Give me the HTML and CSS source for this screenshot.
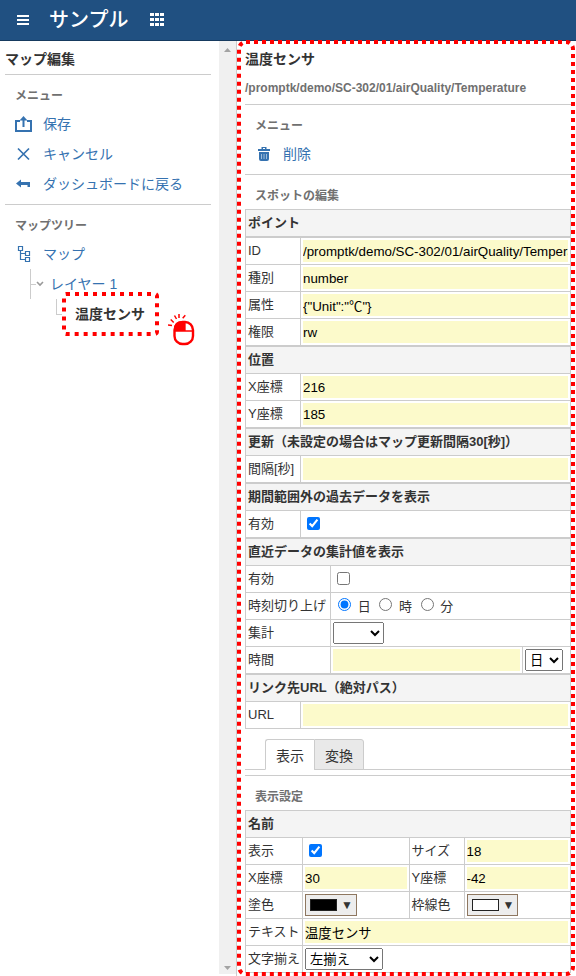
FILE: index.html
```html
<!DOCTYPE html>
<html lang="ja">
<head>
    <meta charset="UTF-8">
    <meta name="viewport" content="width=device-width, initial-scale=1.0">
    <title>マップ編集 - サンプル</title>
    <link rel="stylesheet" href="styles.css">
</head>
<body>

    <!-- Header -->
    <header class="header">
        <button class="header-btn" type="button" aria-label="Menu">
            <svg width="16" height="16" viewBox="0 0 16 16"><path d="M2 4h12M2 8h12M2 12h12" stroke="#fff" stroke-width="2"/></svg>
        </button>
        <a class="brand" href="#">サンプル</a>
        <button class="header-btn" type="button" aria-label="Apps">
            <svg width="16" height="16" viewBox="0 0 16 16" fill="#fff"><path d="M1 1h4v3H1zM6 1h4v3H6zM11 1h4v3h-4zM1 6h4v3H1zM6 6h4v3H6zM11 6h4v3h-4zM1 11h4v3H1zM6 11h4v3H6zM11 11h4v3h-4z"/></svg>
        </button>
    </header>

    <div class="layout">

        <!-- Sidebar -->
        <nav class="sidebar">
            <h1 class="pane-title">マップ編集</h1>
            <section class="section">
                <h2 class="section-title">メニュー</h2>
                <ul class="menu">
                    <li><a href="#">
                        <svg width="18" height="16" viewBox="0 0 18 16" fill="none" stroke="#3572b0" stroke-width="2"><path d="M5 5H1v10h15V5h-4M8.500 11V3"/><path d="M4.500 4.500L8.500 0l4 4.500z" fill="#3572b0" stroke="none"/></svg>
                        保存</a></li>
                    <li><a href="#">
                        <svg width="18" height="16" viewBox="0 0 18 16" fill="none" stroke="#3572b0" stroke-width="1.7"><path d="M3 2.500l11 11M14 2.500l-11 11"/></svg>
                        キャンセル</a></li>
                    <li><a href="#">
                        <svg width="18" height="16" viewBox="0 0 18 16" fill="#3572b0"><path d="M1 7.500l5-4V6h9v5h-2.500V9H6v2.500z"/></svg>
                        ダッシュボードに戻る</a></li>
                </ul>
            </section>
            <section class="section">
                <h2 class="section-title">マップツリー</h2>
                <ul class="menu">
                    <li><a href="#">
                        <svg width="18" height="18" viewBox="0 0 18 18" fill="none" stroke="#3572b0" stroke-width="1.2"><path d="M3.500 1.500h4v4h-4zM10.500 6.500h4v4h-4zM10.500 12.500h4v4h-4zM5.500 5.500v9h5M5.500 8.500h5"/></svg>
                        マップ</a>
                        <ul class="tree">
                            <li class="tree-layer">
                                <a href="#">
                                    <svg width="8" height="8" viewBox="0 0 8 8" fill="none" stroke="#999" stroke-width="1.6"><path d="M1 2l3 3 3-3"/></svg>
                                    レイヤー 1</a>
                                <ul class="tree">
                                    <li class="tree-spot">
                                        <a href="#">温度センサ</a>
                                        <svg class="frame spot-frame" aria-hidden="true"><rect class="frame-line" x="2" y="2" rx="2"/></svg>
                                        <svg class="click-mark" width="28" height="34" viewBox="0 0 28 34" fill="none" stroke="#ff0000" aria-hidden="true">
                                            <path d="M6 18v-2q0-8 8-8h3v10z" fill="#ff0000" stroke="none"/>
                                            <rect x="6.500" y="9" width="18.500" height="22" rx="8" stroke-width="2.4"/>
                                            <path d="M17 9v9M6 18h19" stroke-width="1.3"/>
                                            <path d="M0 12l4 .6M2.700 6.500l3 3M6.500 2.500l2 3.500M11 1v4M17.300 2.300l-2.600 3" stroke-width="1.5"/>
                                        </svg>
                                    </li>
                                </ul>
                            </li>
                        </ul>
                    </li>
                </ul>
            </section>
        </nav>
        <div class="scrollbar">
            <svg width="17" height="17" viewBox="0 0 17 17"><path d="M5 11l3.500-4L12 11z" fill="#a3a3a3"/></svg>
            <svg width="17" height="17" viewBox="0 0 17 17"><path d="M5 9l3.500 4L12 9z" fill="#a3a3a3"/></svg>
        </div>

        <!-- Spot editor -->
        <main class="editor">
            <h1 class="pane-title">温度センサ</h1>
            <p class="path">/promptk/demo/SC-302/01/airQuality/Temperature</p>
            <section class="section">
                <h2 class="section-title">メニュー</h2>
                <ul class="menu">
                    <li><a href="#">
                        <svg width="18" height="16" viewBox="0 0 18 16" fill="#3572b0"><path d="M3 3h3.500V1h5v2H15v2H3zM8 2v1h2V2zM4 6h10v7q0 2-2 2H6q-2 0-2-2z" fill-rule="evenodd"/><path d="M6.500 8v5M9 8v5M11.500 8v5" stroke="#9dbbd9"/></svg>
                        削除</a></li>
                </ul>
            </section>

            <section class="section section-form">
                <h2 class="section-title">スポットの編集</h2>
                <table class="form">
                    <tr><th>ポイント</th></tr>
                </table>
                <table class="form">
                    <colgroup><col class="col-label"><col></colgroup>
                    <tr><td><label for="pointId">ID</label></td><td><input type="text" id="pointId" value="/promptk/demo/SC-302/01/airQuality/Temperature"></td></tr>
                    <tr><td><label for="pointType">種別</label></td><td><input type="text" id="pointType" value="number"></td></tr>
                    <tr><td><label for="pointAttr">属性</label></td><td><input type="text" id="pointAttr" value="{&quot;Unit&quot;:&quot;℃&quot;}"></td></tr>
                    <tr><td><label for="pointPerm">権限</label></td><td><input type="text" id="pointPerm" value="rw"></td></tr>
                </table>
                <table class="form">
                    <colgroup><col class="col-label"><col></colgroup>
                    <tr><th colspan="2">位置</th></tr>
                    <tr><td><label for="posX">X座標</label></td><td><input type="text" id="posX" value="216"></td></tr>
                    <tr><td><label for="posY">Y座標</label></td><td><input type="text" id="posY" value="185"></td></tr>
                </table>
                <table class="form">
                    <colgroup><col class="col-label"><col></colgroup>
                    <tr><th colspan="2">更新（未設定の場合はマップ更新間隔30[秒]）</th></tr>
                    <tr><td><label for="interval">間隔[秒]</label></td><td><input type="text" id="interval"></td></tr>
                </table>
                <table class="form">
                    <colgroup><col class="col-label"><col></colgroup>
                    <tr><th colspan="2">期間範囲外の過去データを表示</th></tr>
                    <tr><td><label for="pastData">有効</label></td><td><input type="checkbox" id="pastData" checked></td></tr>
                </table>
                <table class="form">
                    <colgroup><col class="col-label-wide"><col><col class="col-unit"></colgroup>
                    <tr><th colspan="3">直近データの集計値を表示</th></tr>
                    <tr><td><label for="aggEnabled">有効</label></td><td colspan="2"><input type="checkbox" id="aggEnabled"></td></tr>
                    <tr>
                        <td>時刻切り上げ</td>
                        <td colspan="2">
                            <input type="radio" name="roundUp" id="roundDay" checked> <label for="roundDay">日</label>
                            <input type="radio" name="roundUp" id="roundHour"> <label for="roundHour">時</label>
                            <input type="radio" name="roundUp" id="roundMin"> <label for="roundMin">分</label>
                        </td>
                    </tr>
                    <tr><td><label for="aggType">集計</label></td><td colspan="2"><select class="select-agg" id="aggType"><option></option></select></td></tr>
                    <tr>
                        <td><label for="aggTime">時間</label></td>
                        <td><input type="text" id="aggTime"></td>
                        <td><select class="select-unit" aria-label="時間の単位"><option>日</option></select></td>
                    </tr>
                </table>
                <table class="form">
                    <colgroup><col class="col-label"><col></colgroup>
                    <tr><th colspan="2">リンク先URL（絶対パス）</th></tr>
                    <tr><td><label for="linkUrl">URL</label></td><td><input type="text" id="linkUrl"></td></tr>
                </table>
            </section>

            <div class="tabs">
                <button class="tab active" type="button">表示</button>
                <button class="tab" type="button">変換</button>
            </div>

            <section class="section section-form">
                <h2 class="section-title">表示設定</h2>
                <table class="form">
                    <colgroup><col class="col-name"><col><col class="col-label"><col></colgroup>
                    <tr><th colspan="4">名前</th></tr>
                    <tr>
                        <td><label for="nameShow">表示</label></td>
                        <td><input type="checkbox" id="nameShow" checked></td>
                        <td><label for="nameSize">サイズ</label></td>
                        <td><input type="text" id="nameSize" value="18"></td>
                    </tr>
                    <tr>
                        <td><label for="nameX">X座標</label></td>
                        <td><input type="text" id="nameX" value="30"></td>
                        <td><label for="nameY">Y座標</label></td>
                        <td><input type="text" id="nameY" value="-42"></td>
                    </tr>
                    <tr>
                        <td><label for="fillColor">塗色</label></td>
                        <td><button class="color-btn" type="button" id="fillColor"><span class="swatch black"></span>▼</button></td>
                        <td><label for="lineColor">枠線色</label></td>
                        <td><button class="color-btn" type="button" id="lineColor"><span class="swatch"></span>▼</button></td>
                    </tr>
                    <tr><td><label for="nameText">テキスト</label></td><td colspan="3"><input type="text" id="nameText" value="温度センサ"></td></tr>
                    <tr><td><label for="nameAlign">文字揃え</label></td><td colspan="3"><select class="select-align" id="nameAlign"><option>左揃え</option></select></td></tr>
                </table>
            </section>
            <svg class="frame editor-frame" aria-hidden="true"><rect class="frame-line" x="2" y="2" rx="7"/></svg>
        </main>
    </div>

</body>
</html>
```

FILE: styles.css
```css
* {
    margin: 0;
    padding: 0;
    box-sizing: border-box;
}
body {
    background-color: #fff;
    color: #333;
    font-family: "Liberation Sans", Arial, "Noto Sans CJK JP", sans-serif;
    font-size: 14px;
    line-height: 20px;
}
ul {
    list-style: none;
}
a {
    color: #3572b0;
    text-decoration: none;
}

/* Header */
.header {
    display: flex;
    align-items: center;
    height: 41px;
    padding: 0 15px;
    background-color: #205081;
    border-bottom: 1px solid #163a5f;
}
.header-btn {
    width: 16px;
    height: 16px;
    border: none;
    background: none;
    cursor: pointer;
}
.header-btn svg {
    display: block;
}
.brand {
    margin: 0 21px 0 18px;
    color: #fff;
    font-size: 20px;
    font-weight: 500;
}

.layout {
    display: flex;
    min-height: calc(100vh - 41px);
}

/* Sidebar */
.sidebar {
    width: 219px;
    flex-shrink: 0;
    padding: 3px 8px 0 5px;
}
.scrollbar {
    display: flex;
    flex-direction: column;
    justify-content: space-between;
    width: 17px;
    flex-shrink: 0;
    margin-bottom: 2px;
    background-color: #f0f0f0;
}
.pane-title {
    height: 30px;
    font-size: 14px;
    font-weight: bold;
    line-height: 30px;
}
.section {
    padding: 5px 0;
    border-top: 1px solid #ccc;
}
.section-title {
    padding: 3px 0 0 10px;
    color: #707070;
    font-size: 12px;
    font-weight: bold;
    line-height: 26px;
}
.menu a {
    display: flex;
    align-items: center;
    gap: 10px;
    height: 30px;
    padding-left: 10px;
}

/* Map tree */
.tree li {
    position: relative;
}
.tree-layer {
    margin-left: 25px;
}
.menu .tree-layer > a {
    gap: 6px;
    padding-left: 6px;
}
.tree-spot {
    margin-left: 26px;
}
.menu .tree-spot a {
    padding-left: 19px;
    color: #333;
    font-weight: bold;
}
.tree li::before {
    content: "";
    position: absolute;
    top: 0;
    left: 0;
    width: 5px;
    height: 15px;
    border-left: 1px solid #ccc;
    border-bottom: 1px solid #ccc;
}
.tree-layer::after {
    content: "";
    position: absolute;
    top: 0;
    left: 0;
    height: 30px;
    border-left: 1px solid #ccc;
}

/* Red dotted frames */
.frame {
    position: absolute;
    pointer-events: none;
}
.frame-line {
    width: calc(100% - 4px);
    height: calc(100% - 4px);
    fill: none;
    stroke: #ff0000;
    stroke-width: 4px;
    stroke-dasharray: 4 4;
}
.spot-frame {
    top: -7px;
    left: 6px;
    width: 97px;
    height: 44px;
}
.spot-frame .frame-line {
    stroke-dasharray: 4 5;
}
.editor-frame {
    top: -1px;
    left: 0;
    width: calc(100% - 1px);
    height: calc(100% + 1px);
}
.click-mark {
    position: absolute;
    top: 14px;
    left: 112px;
}

/* Editor */
.editor {
    position: relative;
    flex: 1;
    min-width: 0;
    padding: 3px 5px 0 8px;
    border-left: 1px solid #ccc;
}
.path {
    padding-bottom: 1px;
    color: #707070;
    font-size: 12px;
    font-weight: bold;
    line-height: 29px;
}
.section-form {
    padding-bottom: 0;
}
.form {
    width: 100%;
    table-layout: fixed;
    border-collapse: collapse;
    font-size: 13px;
}
.form th,
.form td {
    height: 27px;
    padding: 0 2px;
    border: 1px solid #ccc;
    text-align: left;
    vertical-align: middle;
    white-space: nowrap;
}
.form th {
    background-color: #f4f4f4;
    font-weight: bold;
}
.col-label {
    width: 55px;
}
.col-name {
    width: 57px;
}
.col-label-wide {
    width: 85px;
}
.col-unit {
    width: 48px;
}
.form input[type="text"] {
    display: block;
    width: 100%;
    height: 22px;
    border: none;
    background-color: #fcfacb;
    color: #000;
    font-family: inherit;
}
.form input[type="checkbox"] {
    display: block;
    margin: 2px 3px 4px 4px;
}
.form input[type="radio"] {
    margin: 3px 3px 0 5px;
}
.form select {
    display: block;
    height: 22px;
    font-family: inherit;
}
.select-agg {
    width: 51px;
}
.select-unit {
    width: 38px;
}
.select-align {
    width: 78px;
}
.color-btn {
    display: flex;
    align-items: center;
    gap: 4px;
    height: 22px;
    padding: 0 3px 0 4px;
    border: 1px solid #8e7760;
    background-color: #ededed;
    color: #333;
    font-size: 12px;
    line-height: 16px;
    cursor: pointer;
}
.swatch {
    width: 27px;
    height: 12px;
    border: 1px solid #222;
    background-color: #fff;
}
.swatch.black {
    background-color: #000;
}

/* Tabs */
.tabs {
    display: flex;
    margin: 10px 0 5px;
    padding-left: 20px;
    border-bottom: 1px solid #ccc;
}
.tab {
    height: 31px;
    margin-bottom: -1px;
    padding: 0 10px;
    border: 1px solid #ccc;
    border-radius: 0 3px 0 0;
    background-color: #e9e9e9;
    color: #333;
    font-family: inherit;
    font-size: 14px;
    cursor: pointer;
}
.tab.active {
    border-right: none;
    border-bottom-color: #fff;
    border-radius: 3px 0 0 0;
    background-color: #fff;
}
```
